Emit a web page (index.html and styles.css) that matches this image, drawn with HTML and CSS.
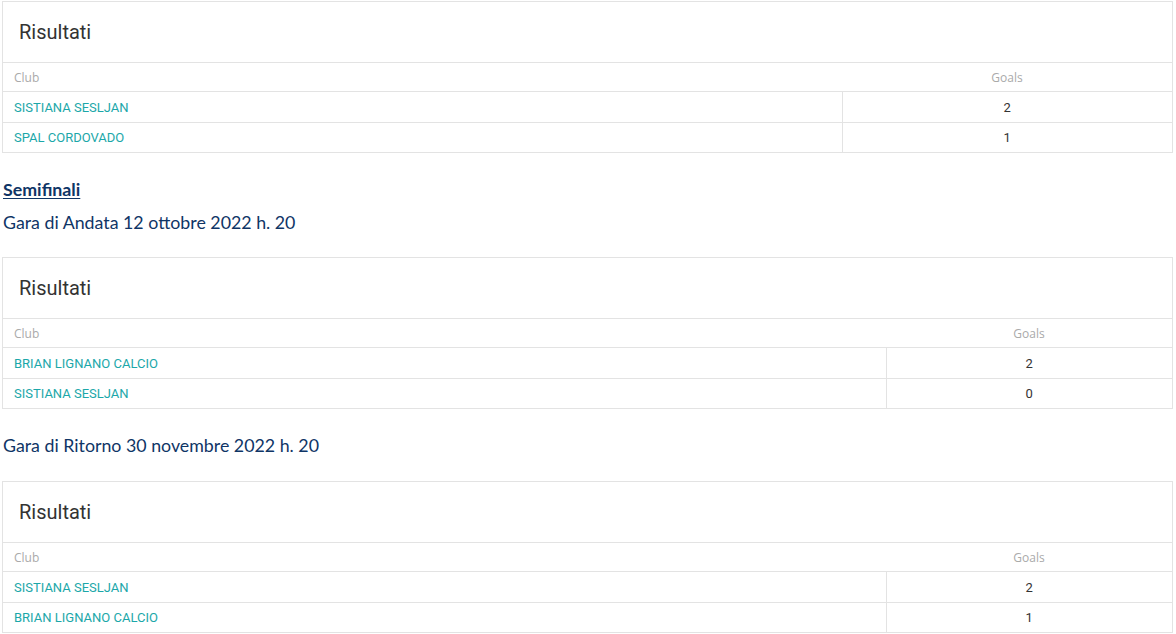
FILE: index.html
```html
<!DOCTYPE html>
<html lang="it">
<head>
<meta charset="utf-8">
<title>Risultati</title>
<link rel="stylesheet" href="styles.css">
</head>
<body>
<div class="page">
  <div class="card">
    <div class="card-title">Risultati</div>
    <table class="results">
      <colgroup><col class="c-club-a"><col></colgroup>
      <thead><tr><th class="th-club">Club</th><th class="th-goals">Goals</th></tr></thead>
      <tbody>
        <tr><td class="club">SISTIANA SESLJAN</td><td class="goals">2</td></tr>
        <tr><td class="club">SPAL CORDOVADO</td><td class="goals">1</td></tr>
      </tbody>
    </table>
  </div>

  <div class="info">
    <a class="round" href="#">Semifinali</a>
    <p class="match">Gara di Andata 12 ottobre 2022 h. 20</p>
  </div>

  <div class="card">
    <div class="card-title">Risultati</div>
    <table class="results">
      <colgroup><col class="c-club-b"><col></colgroup>
      <thead><tr><th class="th-club">Club</th><th class="th-goals">Goals</th></tr></thead>
      <tbody>
        <tr><td class="club">BRIAN LIGNANO CALCIO</td><td class="goals">2</td></tr>
        <tr><td class="club">SISTIANA SESLJAN</td><td class="goals">0</td></tr>
      </tbody>
    </table>
  </div>

  <div class="info info-second">
    <p class="match">Gara di Ritorno 30 novembre 2022 h. 20</p>
  </div>

  <div class="card">
    <div class="card-title">Risultati</div>
    <table class="results">
      <colgroup><col class="c-club-b"><col></colgroup>
      <thead><tr><th class="th-club">Club</th><th class="th-goals">Goals</th></tr></thead>
      <tbody>
        <tr><td class="club">SISTIANA SESLJAN</td><td class="goals">2</td></tr>
        <tr><td class="club">BRIAN LIGNANO CALCIO</td><td class="goals">1</td></tr>
      </tbody>
    </table>
  </div>
</div>
</body>
</html>
```

FILE: styles.css
```css
html, body {
  margin: 0;
  padding: 0;
  background: #fff;
}

.page {
  padding: 1px 3px 0 2px;
  width: 1171px;
}

.card {
  border: 1px solid #e3e3e3;
  background: #fff;
}

.card-title {
  height: 60px;
  display: flex;
  align-items: center;
  padding-left: 16px;
  font-family: Roboto, "Liberation Sans", sans-serif;
  font-size: 20px;
  color: #333;
  border-bottom: 1px solid #e3e3e3;
}

.results {
  width: 100%;
  border-collapse: collapse;
  table-layout: fixed;
}

.c-club-a { width: 839px; }
.c-club-b { width: 883px; }

.results th {
  height: 28px;
  padding: 0 11px;
  font-family: "Open Sans", "Noto Sans", sans-serif;
  font-size: 12px;
  font-weight: 400;
  color: #aaa;
  border-bottom: 1px solid #e3e3e3;
}

.th-club { text-align: left; }
.th-goals { text-align: center; }

.results td {
  height: 30px;
  padding: 0 11px;
  font-family: Roboto, "Liberation Sans", sans-serif;
  font-size: 13px;
  border-top: 1px solid #e3e3e3;
}

.results tbody tr:first-child td { border-top: none; }
.results tbody tr:last-child td { height: 29px; }

.club {
  color: #1ba7a9;
  text-align: left;
}

.goals {
  color: #333;
  text-align: center;
  border-left: 1px solid #e3e3e3;
}

.info {
  display: flex;
  flex-direction: column;
  align-items: flex-start;
  gap: 7px;
  padding: 23px 0 22px 1px;
  font-family: Lato, "Liberation Sans", sans-serif;
  font-size: 17.8px;
  line-height: 26px;
  color: #0f3566;
}

.info-second {
  padding: 23px 0 23px 1px;
}

.round {
  font-weight: 700;
  color: #0f3566;
  text-decoration: underline;
  text-underline-offset: 2px;
}

.match {
  margin: 0;
}
```
